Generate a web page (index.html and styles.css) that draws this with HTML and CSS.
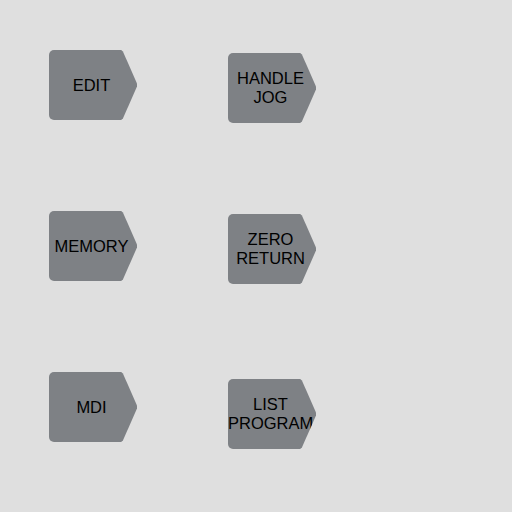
FILE: index.html
```html
<!DOCTYPE html>
<html lang="en">
<head>
  <meta charset="UTF-8" />
  <meta name="viewport" content="width=device-width, initial-scale=1.0">
  <title>Mode Select</title>
  <link rel="stylesheet" href="styles.css">
</head>
<body>
  <div class="mode-panel">
    <button class="mode-key">EDIT</button>
    <button class="mode-key right">HANDLE<br>JOG</button>
    <button class="mode-key">MEMORY</button>
    <button class="mode-key right">ZERO<br>RETURN</button>
    <button class="mode-key">MDI</button>
    <button class="mode-key right low">LIST<br>PROGRAM</button>
  </div>
</body>
</html>
```

FILE: styles.css
```css
body { margin:0; background:#dfdfdf; font-family:'Liberation Sans', Arial, sans-serif; min-height:512px; }
.mode-panel { display:grid; grid-template-columns:88px 88px; grid-template-rows:70px 70px 70px; column-gap:91px; row-gap:91px; padding:50px 0 0 49px; }
.mode-key { width:88px; height:70px; padding:0 3px 0 0; border:none; border-radius:5px; background:#7e8185; color:#000; font-family:inherit; font-size:16.5px; line-height:19px; text-align:center; cursor:pointer;
  clip-path:polygon(0 0, 82% 0, 84% 2%, 100% 48%, 100% 52%, 84% 98%, 82% 100%, 0 100%); }
.mode-key:hover { background:#8a8d91; }
.mode-key.right { margin-top:3px; }
.mode-key.low { margin-top:7px; }
```
